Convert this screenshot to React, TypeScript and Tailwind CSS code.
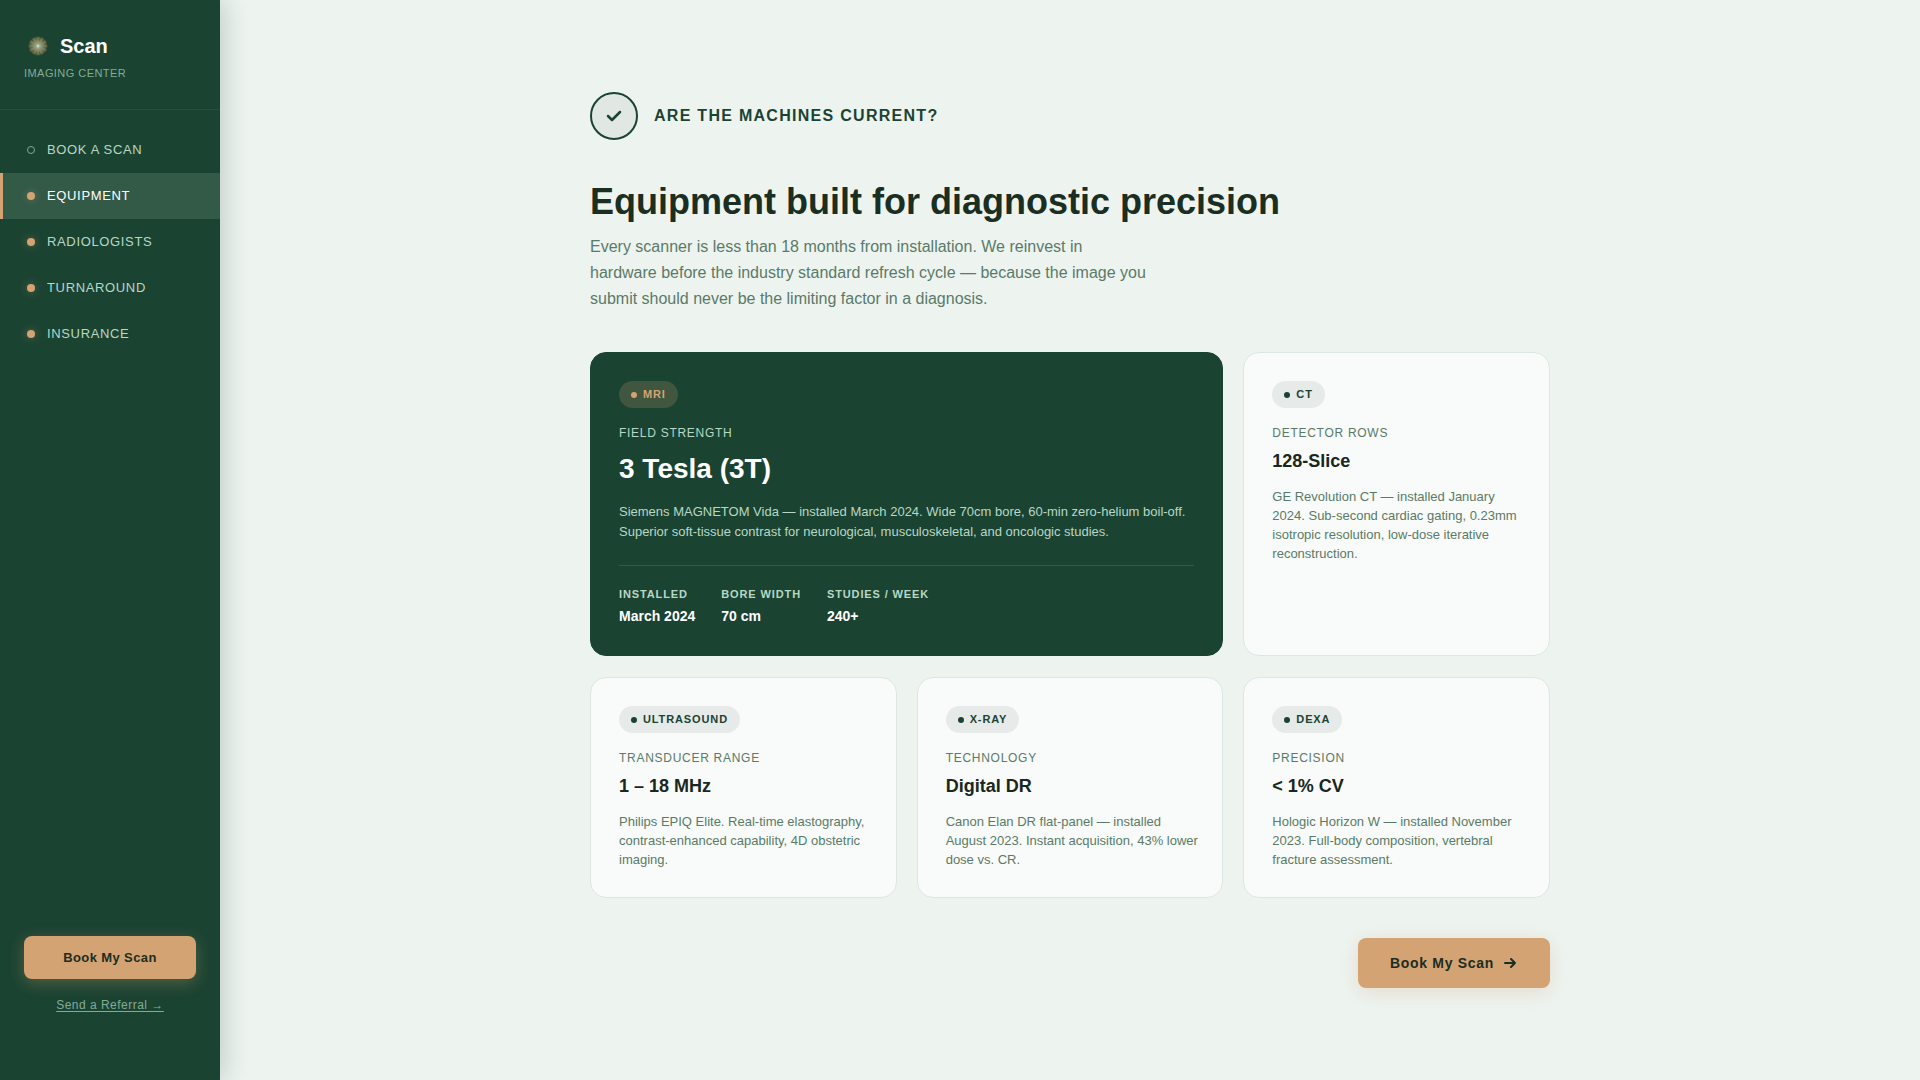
import clsx from "clsx";

type Stat = { label: string; value: string };

type Machine = {
    tag: string;
    label: string;
    value: string;
    text: string;
    featured?: boolean;
    stats?: Stat[];
};

const navItems = [
    { name: "Book a Scan", href: "#book", visited: false },
    { name: "Equipment", href: "#equipment", visited: true },
    { name: "Radiologists", href: "#radiologists", visited: true },
    { name: "Turnaround", href: "#turnaround", visited: true },
    { name: "Insurance", href: "#insurance", visited: true },
];

const machines: Machine[] = [
    {
        tag: "MRI",
        label: "Field Strength",
        value: "3 Tesla (3T)",
        text: "Siemens MAGNETOM Vida — installed March 2024. Wide 70cm bore, 60-min zero-helium boil-off. Superior soft-tissue contrast for neurological, musculoskeletal, and oncologic studies.",
        featured: true,
        stats: [
            { label: "Installed", value: "March 2024" },
            { label: "Bore width", value: "70 cm" },
            { label: "Studies / week", value: "240+" },
        ],
    },
    {
        tag: "CT",
        label: "Detector Rows",
        value: "128-Slice",
        text: "GE Revolution CT — installed January 2024. Sub-second cardiac gating, 0.23mm isotropic resolution, low-dose iterative reconstruction.",
    },
    {
        tag: "Ultrasound",
        label: "Transducer Range",
        value: "1 – 18 MHz",
        text: "Philips EPIQ Elite. Real-time elastography, contrast-enhanced capability, 4D obstetric imaging.",
    },
    {
        tag: "X-Ray",
        label: "Technology",
        value: "Digital DR",
        text: "Canon Elan DR flat-panel — installed August 2023. Instant acquisition, 43% lower dose vs. CR.",
    },
    {
        tag: "DEXA",
        label: "Precision",
        value: "< 1% CV",
        text: "Hologic Horizon W — installed November 2023. Full-body composition, vertebral fracture assessment.",
    },
];

// Burst of petals around a pale core
function Logo() {
    const rays = Array.from({ length: 12 }, (_, i) => i * 30);

    return (
        <svg width="28" height="28" viewBox="0 0 28 28" aria-hidden="true">
            <defs>
                <radialGradient id="burst">
                    <stop offset="0" stopColor="#b3c6ae" />
                    <stop offset="0.35" stopColor="#8f9675" />
                    <stop offset="0.75" stopColor="#757850" />
                    <stop offset="1" stopColor="#4b583a" />
                </radialGradient>
            </defs>
            <circle cx="14" cy="14" r="9.5" fill="url(#burst)" />
            {rays.map((angle) => (
                <path
                    key={angle}
                    d="M14 9.5L13.5 4h1z"
                    fill="#1b4332"
                    opacity="0.8"
                    transform={`rotate(${angle + 15} 14 14)`}
                />
            ))}
            <circle cx="14" cy="14" r="1.2" fill="#c3dccb" />
        </svg>
    );
}

function Sidebar() {
    return (
        <aside className="w-[220px] shrink-0 flex flex-col bg-[#1b4332] shadow-[4px_0_24px_rgba(13,40,28,0.2)]">
            <div className="px-6 pt-8 pb-[27px] border-b border-[#24503c]">
                <div className="flex items-center gap-2">
                    <Logo />
                    <span className="text-xl leading-7 font-bold text-white">Scan</span>
                </div>
                <p className="mt-1 text-[11px] leading-[18px] tracking-[0.04em] uppercase text-[#82ac95]">
                    Imaging Center
                </p>
            </div>

            <nav className="pt-[17px]">
                <ul>
                    {navItems.map((item) => {
                        const active = item.name === "Equipment";
                        return (
                            <li key={item.name}>
                                <a
                                    href={item.href}
                                    aria-current={active ? "page" : undefined}
                                    className={clsx(
                                        "flex items-center gap-3 h-[46px] px-6 border-l-[3px] text-[13px] tracking-[0.05em] uppercase",
                                        active
                                            ? "border-[#d4a373] bg-[#325a47] text-white"
                                            : "border-transparent text-[#b7d8c5]"
                                    )}
                                >
                                    <span
                                        className={clsx(
                                            "size-2 rounded-full",
                                            item.visited
                                                ? "bg-[#d4a373] shadow-[0_0_8px_rgba(212,163,115,0.4)]"
                                                : "border border-[#82ac95]"
                                        )}
                                    />
                                    {item.name}
                                </a>
                            </li>
                        );
                    })}
                </ul>
            </nav>

            <div className="mt-auto px-6 pb-16 text-center">
                <button
                    type="button"
                    className="block w-full h-[43px] rounded-lg bg-[#d4a373] text-[13px] font-bold tracking-[0.03em] text-[#1a2e22] shadow-[0_4px_16px_rgba(212,163,115,0.3)]"
                >
                    Book My Scan
                </button>
                <a
                    href="#referral"
                    className="block mt-4 text-xs leading-[21px] tracking-[0.04em] text-[#82ac95] underline underline-offset-2"
                >
                    Send a Referral →
                </a>
            </div>
        </aside>
    );
}

function MachineCard({ machine }: { machine: Machine }) {
    const { tag, label, value, text, featured, stats } = machine;

    return (
        <article
            className={clsx(
                "rounded-2xl border py-7 pl-7",
                featured
                    ? "col-span-2 pr-7 bg-[#1b4332] border-[#1b4332]"
                    : "pr-6 bg-[#f8fbf9] border-[#dde7e1]"
            )}
        >
            <span
                className={clsx(
                    "flex w-fit items-center gap-1.5 h-[27px] px-3 mb-4 rounded-full text-[11px] font-bold tracking-[0.08em] uppercase",
                    featured ? "bg-[#40563f] text-[#d4a373]" : "bg-[#e6eae8] text-[#1b4332]"
                )}
            >
                <span className="size-1.5 rounded-full bg-current" />
                {tag}
            </span>

            <p
                className={clsx(
                    "mb-2 text-xs leading-[18px] tracking-[0.06em] uppercase",
                    featured ? "text-[#b7d8c5]" : "text-[#5a7a68]"
                )}
            >
                {label}
            </p>
            <h2
                className={clsx(
                    "mb-3.5 font-bold",
                    featured ? "text-[28px] leading-[38px] text-white" : "text-lg leading-[23px] text-[#1a2620]"
                )}
            >
                {value}
            </h2>
            <p
                className={clsx(
                    "text-[13px]",
                    featured ? "leading-5 text-[#b7d8c5]" : "leading-[19px] text-[#5a7a68]"
                )}
            >
                {text}
            </p>

            {stats && (
                <dl className="flex gap-[26px] mt-[23px] pt-5 border-t border-[#325a47]">
                    {stats.map((stat) => (
                        <div key={stat.label}>
                            <dt className="mb-0.5 text-[11px] leading-[17px] font-bold tracking-[0.08em] uppercase text-[#b7d8c5]">
                                {stat.label}
                            </dt>
                            <dd className="text-sm leading-[22px] font-bold text-white">{stat.value}</dd>
                        </div>
                    ))}
                </dl>
            )}
        </article>
    );
}

export default function App() {
    return (
        <div className="flex min-h-screen bg-[#edf4f0] font-['Liberation_Sans',Arial,sans-serif]">
            <Sidebar />

            <main className="flex-1 flex flex-col justify-center px-10 py-16">
                <div className="w-full max-w-[960px] mx-auto">
                    <div className="flex items-center gap-4 mb-10">
                        <span className="flex items-center justify-center size-12 rounded-full border-2 border-[#1b4332] bg-[#e1e8e4] text-[#1b4332]">
                            <svg width="20" height="20" viewBox="0 0 20 20" fill="none" stroke="currentColor" strokeWidth="2.5" strokeLinecap="round" strokeLinejoin="round" aria-hidden="true">
                                <path d="M4 10l4 4 8-8" />
                            </svg>
                        </span>
                        <p className="text-base font-bold tracking-[0.08em] uppercase text-[#1b4332]">
                            Are the machines current?
                        </p>
                    </div>

                    <h1 className="mb-2.5 text-4xl leading-[44px] font-bold text-[#1a2e22]">
                        Equipment built for diagnostic precision
                    </h1>
                    <p className="mb-10 max-w-[560px] text-base leading-[26px] text-[#5a7a68]">
                        Every scanner is less than 18 months from installation. We reinvest in hardware before the
                        industry standard refresh cycle — because the image you submit should never be the limiting
                        factor in a diagnosis.
                    </p>

                    <div className="grid grid-cols-3 gap-x-5 gap-y-[21px]">
                        {machines.map((machine) => (
                            <MachineCard key={machine.tag} machine={machine} />
                        ))}
                    </div>

                    <div className="flex justify-end mt-10">
                        <button
                            type="button"
                            className="flex items-center gap-2 h-[50px] px-8 rounded-lg bg-[#d4a373] text-sm font-bold tracking-[0.05em] text-[#1a2e22] shadow-[0_4px_20px_rgba(212,163,115,0.3)]"
                        >
                            Book My Scan
                            <svg width="16" height="16" viewBox="0 0 16 16" fill="none" stroke="currentColor" strokeWidth="2" strokeLinecap="round" strokeLinejoin="round" aria-hidden="true">
                                <path d="M3 8h10M9 4l4 4-4 4" />
                            </svg>
                        </button>
                    </div>
                </div>
            </main>
        </div>
    );
}
